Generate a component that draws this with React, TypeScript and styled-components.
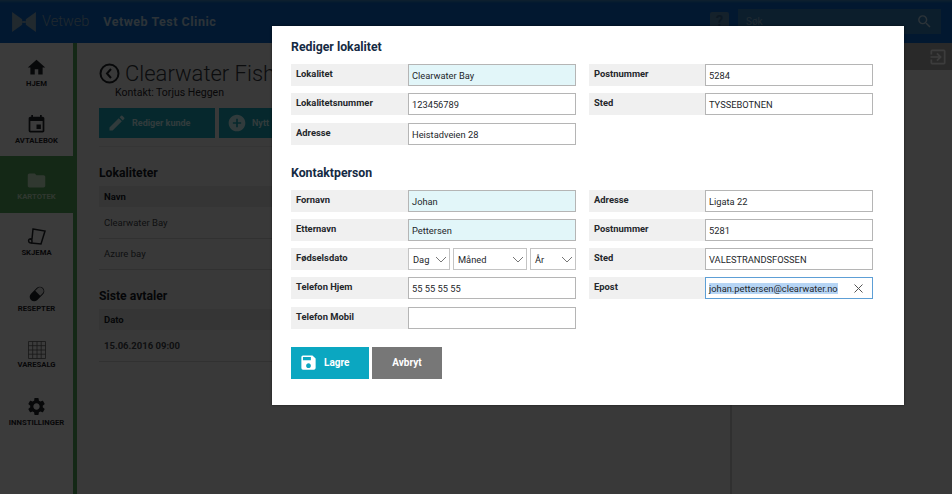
import React from 'react';
import styled, { createGlobalStyle } from 'styled-components';
import { MdHome, MdEvent, MdFolder, MdSettings, MdEdit, MdAddCircle, MdSave, MdSearch, MdExitToApp } from 'react-icons/md';

const GlobalStyle = createGlobalStyle`
  html, body {
    margin: 0;
    padding: 0;
    height: 100%;
    overflow: hidden;
    background: #474747;
    font-family: Roboto, "Liberation Sans", sans-serif;
  }
  * { box-sizing: border-box; }
`;

const Page = styled.div`
  position: relative;
  width: 952px;
  height: 494px;
  overflow: hidden;
  background: #dcdcdc;
`;

const Behind = styled.div`
  width: 952px;
  height: 494px;
  display: flex;
  flex-direction: column;
`;

// the dimmed layer between the page and the dialog
const Backdrop = styled.div`
  position: absolute;
  inset: 0;
  background: rgba(0, 0, 0, 0.74);
`;

const Header = styled.header`
  height: 43px;
  flex: none;
  display: flex;
  align-items: center;
  padding: 0 11px 0 12px;
  background: linear-gradient(#3a7fb0 0, #0a5fb8 3px, #0a5fb8 100%);
`;

const Brand = styled.span`
  margin-left: 6px;
  font-size: 14.5px;
  font-weight: 300;
  color: #7f9db2;
`;

const Clinic = styled.span`
  margin-left: 14px;
  font-size: 12.5px;
  font-weight: 700;
  letter-spacing: 0.5px;
  color: #a9c4d8;
`;

const Help = styled.div`
  margin-left: auto;
  width: 19px;
  height: 19px;
  border-radius: 2px;
  background: #4f7fa8;
  color: #2f5f88;
  font-size: 15px;
  font-weight: 700;
  text-align: center;
  line-height: 19px;
`;

const Search = styled.div`
  width: 203px;
  height: 25px;
  margin-left: 9px;
  padding: 0 8px;
  display: flex;
  align-items: center;
  justify-content: space-between;
  background: #2f75ab;
  color: #7fa4c0;
  font-size: 10px;
`;

const Body = styled.div`
  flex: 1;
  display: flex;
  min-height: 0;
`;

const Sidebar = styled.nav`
  width: 77px;
  flex: none;
  background: #e4e4e4;
  border-right: 4px solid #4f9a55;
`;

const NavItem = styled.div<{ $active?: boolean }>`
  height: 56.5px;
  padding-top: 3px;
  display: flex;
  flex-direction: column;
  align-items: center;
  justify-content: center;
  gap: 1px;
  background: ${(p) => (p.$active ? '#4f9a55' : 'transparent')};
  color: ${(p) => (p.$active ? '#b8d6ba' : '#1e2126')};
  font-size: 7.7px;
  font-weight: 700;
  svg { display: block; }
`;

const Main = styled.main`
  flex: 1;
  min-width: 0;
  padding: 18px 0 0 22px;
  overflow: hidden;
`;

const TitleRow = styled.div`
  display: flex;
  align-items: center;
  gap: 5px;
  color: #1e2126;
`;

const Title = styled.h1`
  margin: 0;
  font-size: 22px;
  font-weight: 300;
  white-space: nowrap;
  color: #2e3238;
`;

const ContactLine = styled.div`
  margin: 0 0 9px 16px;
  font-size: 10.5px;
  color: #1e2126;
`;

const ActionRow = styled.div`
  display: flex;
  gap: 4px;
  padding-bottom: 8px;
  border-bottom: 1px solid #cccccc;
  width: 620px;
`;

const Action = styled.div`
  height: 30px;
  width: 116px;
  padding-left: 8px;
  display: flex;
  align-items: center;
  gap: 5px;
  flex: none;
  background: #1a9cad;
  color: #bfe3e8;
  font-size: 9px;
  font-weight: 700;
`;

const Section = styled.h2`
  margin: 19px 0 6px;
  font-size: 12.2px;
  font-weight: 700;
  color: #15191f;
`;

const Table = styled.div`
  width: 620px;
`;

const TableHead = styled.div`
  height: 21px;
  padding: 0 5px;
  display: flex;
  align-items: center;
  background: #cccccc;
  color: #15191f;
  font-size: 9.5px;
  font-weight: 700;
`;

const TableRow = styled.div<{ $bold?: boolean }>`
  height: 31.5px;
  padding: 0 5px;
  display: flex;
  align-items: center;
  border-bottom: 1px solid #bfbfbf;
  color: #3a3e44;
  font-size: 9.5px;
  font-weight: ${(p) => (p.$bold ? 700 : 400)};
`;

const SidePanel = styled.aside`
  width: 222px;
  flex: none;
  margin-top: 27px;
  border-left: 2px solid #b8b8b8;
  position: relative;
`;

const Logout = styled.div`
  position: absolute;
  top: -27px;
  right: 0;
  width: 48px;
  height: 27px;
  padding-right: 4px;
  display: flex;
  align-items: center;
  justify-content: flex-end;
  background: #a0a0a0;
  color: #e8e8e8;
`;

const Dialog = styled.section`
  position: absolute;
  left: 272px;
  top: 26px;
  width: 632px;
  height: 379px;
  padding: 14px 31px 0 19px;
  background: #fff;
  box-shadow: 0 0 2px rgba(0, 0, 0, 0.6);
`;

const DialogTitle = styled.h3<{ $top?: number }>`
  margin: ${(p) => p.$top ?? 0}px 0 9px;
  height: 15px;
  line-height: 15px;
  font-size: 12.3px;
  font-weight: 700;
  color: #152a43;
`;

const Columns = styled.div`
  display: grid;
  grid-template-columns: 285px 284px;
  column-gap: 13px;
`;

const Column = styled.div`
  display: flex;
  flex-direction: column;
  gap: 7.25px;
`;

const Row = styled.div`
  height: 22px;
  display: flex;
  background: #f0f0f0;
`;

const Label = styled.label`
  flex: 1;
  padding: 4px 0 0 5px;
  font-size: 9.4px;
  font-weight: 700;
  color: #24272b;
`;

const Field = styled.div<{ $required?: boolean; $focused?: boolean }>`
  width: 168px;
  flex: none;
  padding: 1px 9px 0 3px;
  display: flex;
  align-items: center;
  justify-content: space-between;
  background: ${(p) => (p.$required ? '#e2f6f9' : '#fff')};
  border: 1px solid ${(p) => (p.$focused ? '#5d9fd6' : '#b5b5b5')};
  font-size: 9.3px;
  color: #24272b;
  white-space: nowrap;
`;

const Selected = styled.span`
  background: #b6d5f5;
`;

const Selects = styled.div`
  width: 168px;
  flex: none;
  display: flex;
  gap: 3px;
  background: #fff;
`;

const Select = styled.div<{ $w: number }>`
  width: ${(p) => p.$w}px;
  flex: none;
  padding: 1px 2px 0 4px;
  display: flex;
  align-items: center;
  justify-content: space-between;
  border: 1px solid #c4c4c4;
  font-size: 9.3px;
  color: #24272b;
`;

const Buttons = styled.div`
  margin-top: 18px;
  display: flex;
  gap: 3px;
`;

const Button = styled.button<{ $primary?: boolean }>`
  height: 32px;
  width: ${(p) => (p.$primary ? 78 : 70)}px;
  padding: 0 0 0 ${(p) => (p.$primary ? 8 : 0)}px;
  display: flex;
  align-items: center;
  justify-content: ${(p) => (p.$primary ? 'flex-start' : 'center')};
  gap: 6px;
  border: none;
  background: ${(p) => (p.$primary ? '#0ba7c1' : '#777')};
  color: #fff;
  font-family: inherit;
  font-size: 10px;
  font-weight: 700;
`;

const Logo = () => (
  <svg width="24" height="22" viewBox="0 0 26 24" fill="#7f9db2">
    <path d="M0 1 L11 9 L11 15 L0 23 Z M26 1 L15 9 L15 15 L26 23 Z" />
    <path d="M11 11h4v2h-4z" />
  </svg>
);

const FormIcon = () => (
  <svg width="20" height="20" viewBox="0 0 20 20" fill="none" stroke="#1e2126" strokeWidth="1.5">
    <path d="M6 2 L18 4 L14 17 L4 16 C1 16 1 12 3 12 L5 12 Z" />
    <path d="M3 12 C5 12 6 15 4 16" />
  </svg>
);

const PillIcon = () => (
  <svg width="18" height="18" viewBox="0 0 18 18">
    <g transform="rotate(-45 9 9)">
      <rect x="0.5" y="4.5" width="17" height="9" rx="4.5" fill="#1e2126" />
      <path d="M10 5.5h3.2a3.5 3.5 0 0 1 0 7H10z" fill="#d0d0d0" />
    </g>
  </svg>
);

const GridIcon = () => (
  <svg width="18" height="18" viewBox="0 0 18 18" fill="none" stroke="#555" strokeWidth="0.8">
    <path d="M.5.5h17v17H.5zM.5 4.7h17M.5 9h17M.5 13.2h17M4.7.5v17M9 .5v17M13.2.5v17" />
  </svg>
);

const Chevron = () => (
  <svg width="12" height="7" viewBox="0 0 12 7" fill="none" stroke="#777" strokeWidth="1">
    <path d="M1 1 L6 6 L11 1" />
  </svg>
);

const ClearIcon = () => (
  <svg width="9" height="9" viewBox="0 0 9 9" fill="none" stroke="#555" strokeWidth="1">
    <path d="M.5.5 L8.5 8.5 M8.5.5 L.5 8.5" />
  </svg>
);

const App: React.FC = () => (
  <Page>
    <GlobalStyle />
    <Behind>
      <Header>
        <Logo />
        <Brand>Vetweb</Brand>
        <Clinic>Vetweb Test Clinic</Clinic>
        <Help>?</Help>
        <Search>
          Søk
          <MdSearch size={17} color="#a9c4d8" />
        </Search>
      </Header>
      <Body>
        <Sidebar>
          <NavItem><MdHome size={21} />HJEM</NavItem>
          <NavItem><MdEvent size={21} />AVTALEBOK</NavItem>
          <NavItem $active><MdFolder size={21} />KARTOTEK</NavItem>
          <NavItem><FormIcon />SKJEMA</NavItem>
          <NavItem><PillIcon />RESEPTER</NavItem>
          <NavItem><GridIcon />VARESALG</NavItem>
          <NavItem><MdSettings size={21} />INNSTILLINGER</NavItem>
        </Sidebar>
        <Main>
          <TitleRow>
            <svg width="21" height="21" viewBox="0 0 21 21" fill="none" stroke="currentColor" strokeWidth="2">
              <circle cx="10.5" cy="10.5" r="9" />
              <path d="M12 6 L8 10.5 L12 15" />
            </svg>
            <Title>Clearwater Fish</Title>
          </TitleRow>
          <ContactLine>Kontakt: Torjus Heggen</ContactLine>
          <ActionRow>
            <Action><MdEdit size={20} />Rediger kunde</Action>
            <Action><MdAddCircle size={20} />Nytt</Action>
          </ActionRow>
          <Section>Lokaliteter</Section>
          <Table>
            <TableHead>Navn</TableHead>
            <TableRow>Clearwater Bay</TableRow>
            <TableRow>Azure bay</TableRow>
          </Table>
          <Section>Siste avtaler</Section>
          <Table>
            <TableHead>Dato</TableHead>
            <TableRow $bold>15.06.2016 09:00</TableRow>
          </Table>
        </Main>
        <SidePanel>
          <Logout><MdExitToApp size={20} /></Logout>
        </SidePanel>
      </Body>
    </Behind>
    <Backdrop />
    <Dialog>
      <DialogTitle>Rediger lokalitet</DialogTitle>
      <Columns>
        <Column>
          <Row><Label>Lokalitet</Label><Field $required>Clearwater Bay</Field></Row>
          <Row><Label>Lokalitetsnummer</Label><Field>123456789</Field></Row>
          <Row><Label>Adresse</Label><Field>Heistadveien 28</Field></Row>
        </Column>
        <Column>
          <Row><Label>Postnummer</Label><Field>5284</Field></Row>
          <Row><Label>Sted</Label><Field>TYSSEBOTNEN</Field></Row>
        </Column>
      </Columns>
      <DialogTitle $top={21}>Kontaktperson</DialogTitle>
      <Columns>
        <Column>
          <Row><Label>Fornavn</Label><Field $required>Johan</Field></Row>
          <Row><Label>Etternavn</Label><Field $required>Pettersen</Field></Row>
          <Row>
            <Label>Fødselsdato</Label>
            <Selects>
              <Select $w={42}>Dag<Chevron /></Select>
              <Select $w={74}>Måned<Chevron /></Select>
              <Select $w={46}>År<Chevron /></Select>
            </Selects>
          </Row>
          <Row><Label>Telefon Hjem</Label><Field>55 55 55 55</Field></Row>
          <Row><Label>Telefon Mobil</Label><Field /></Row>
        </Column>
        <Column>
          <Row><Label>Adresse</Label><Field>Ligata 22</Field></Row>
          <Row><Label>Postnummer</Label><Field>5281</Field></Row>
          <Row><Label>Sted</Label><Field>VALESTRANDSFOSSEN</Field></Row>
          <Row>
            <Label>Epost</Label>
            <Field $focused>
              <Selected>johan.pettersen@clearwater.no</Selected>
              <ClearIcon />
            </Field>
          </Row>
        </Column>
      </Columns>
      <Buttons>
        <Button $primary><MdSave size={19} />Lagre</Button>
        <Button>Avbryt</Button>
      </Buttons>
    </Dialog>
  </Page>
);

export default App;
